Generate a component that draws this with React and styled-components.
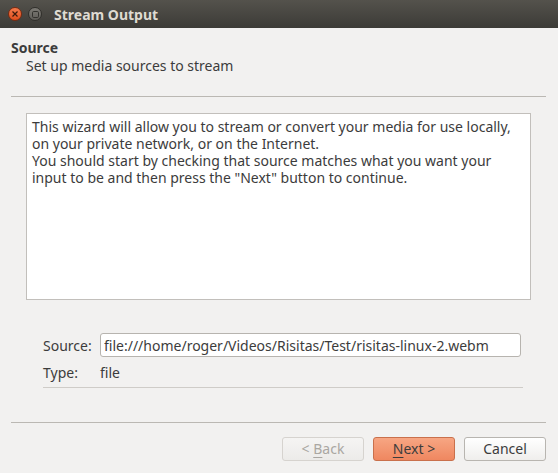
import React from 'react';
import styled, { createGlobalStyle } from 'styled-components';

const GlobalStyle = createGlobalStyle`
  html, body {
    margin: 0;
    padding: 0;
    background: #f2f1f0;
  }
  body {
    font-family: "Noto Sans", "Open Sans", sans-serif;
    font-size: 14px;
    color: #3c3c3c;
  }
`;

const Window = styled.div`
  width: 558px;
  height: 473px;
  display: flex;
  flex-direction: column;
  background: #f2f1f0;
  overflow: hidden;
`;

const TitleBar = styled.div`
  height: 28px;
  flex: none;
  display: flex;
  align-items: center;
  padding-left: 8px;
  gap: 6px;
  background: linear-gradient(#54524c, #3c3b37);
`;

const WinButton = styled.span`
  width: 14px;
  height: 14px;
  box-sizing: border-box;
  border-radius: 50%;
  display: flex;
  align-items: center;
  justify-content: center;
  border: 1px solid ${(p) => (p.close ? '#7a2a10' : '#302f2b')};
  background: ${(p) => (p.close
    ? 'linear-gradient(#f47a4c, #df4f1e)'
    : 'linear-gradient(#7d7b75, #5f5d58)')};
`;

const TitleText = styled.span`
  margin-left: 6px;
  font-weight: 700;
  font-size: 14px;
  color: #dfdbd2;
`;

const Header = styled.div`
  padding: 11px 11px 0;
  line-height: 17px;
`;

const Heading = styled.div`
  font-weight: 700;
`;

const SubHeading = styled.div`
  margin-top: 1px;
  padding-left: 15px;
`;

const Rule = styled.div`
  height: 1px;
  background: ${(p) => p.color || '#bbb8b3'};
  margin: ${(p) => p.margin};
`;

const IntroBox = styled.div`
  margin: 16px 0 0 26px;
  width: 505px;
  height: 187px;
  box-sizing: border-box;
  background: #fff;
  border: 1px solid #c2bfbb;
  padding: 4px 5px;
  line-height: 17px;
`;

const Form = styled.div`
  margin: 33px 0 0 43px;
  width: 480px;
  display: grid;
  grid-template-columns: 57px 1fr;
  row-gap: 7px;
  align-items: center;
`;

const Label = styled.span`
  line-height: 17px;
`;

const TextInput = styled.input`
  width: 421px;
  height: 24px;
  box-sizing: border-box;
  margin: 0;
  border: 1px solid #b7b4af;
  border-radius: 3px;
  background: #fff;
  padding: 0 3px;
  font: inherit;
  color: #3c3c3c;
  outline: none;
`;

const ButtonRow = styled.div`
  margin-top: 14px;
  padding-right: 12px;
  display: flex;
  justify-content: flex-end;
  gap: 9px;
`;

const Button = styled.button`
  width: 82px;
  height: 24px;
  box-sizing: border-box;
  margin: 0;
  padding: 0;
  border-radius: 3px;
  font: inherit;
  line-height: 20px;
  border: 1px solid ${(p) => (p.primary ? '#c9704c' : p.disabled ? '#d6d3cf' : '#b8b5b0')};
  background: ${(p) => (p.primary
    ? 'linear-gradient(#f7a683, #ef8760)'
    : p.disabled
      ? 'linear-gradient(#f5f4f3, #ecebe9)'
      : 'linear-gradient(#ffffff, #efeeec)')};
  color: ${(p) => (p.disabled ? '#aaa7a2' : '#3c3c3c')};
`;

const Mnemonic = styled.span`
  text-decoration: underline;
  text-underline-offset: 3px;
`;

export default function App() {
  return (
    <Window>
      <GlobalStyle />
      <TitleBar>
        <WinButton close>
          <svg width="6" height="6" viewBox="0 0 6 6">
            <path d="M0.5 0.5L5.5 5.5M5.5 0.5L0.5 5.5" stroke="#3a1a0c" strokeWidth="1.2" />
          </svg>
        </WinButton>
        <WinButton>
          <svg width="7" height="7" viewBox="0 0 7 7">
            <rect x="0.5" y="0.5" width="6" height="6" rx="1.2" fill="none" stroke="#33322e" strokeWidth="1" />
          </svg>
        </WinButton>
        <TitleText>Stream Output</TitleText>
      </TitleBar>

      <Header>
        <Heading>Source</Heading>
        <SubHeading>Set up media sources to stream</SubHeading>
      </Header>
      <Rule margin="22px 12px 0 11px" />

      <IntroBox>
        This wizard will allow you to stream or convert your media for use locally,
        on your private network, or on the Internet.
        <br />
        You should start by checking that source matches what you want your
        input to be and then press the "Next" button to continue.
      </IntroBox>

      <Form>
        <Label>Source:</Label>
        <TextInput readOnly value="file:///home/roger/Videos/Risitas/Test/risitas-linux-2.webm" />
        <Label>Type:</Label>
        <Label>file</Label>
      </Form>
      <Rule color="#cfccc8" margin="6px 35px 0 43px" />
      <Rule margin="34px 12px 0 11px" />

      <ButtonRow>
        <Button disabled>&lt; <Mnemonic>B</Mnemonic>ack</Button>
        <Button primary><Mnemonic>N</Mnemonic>ext &gt;</Button>
        <Button>Cancel</Button>
      </ButtonRow>
    </Window>
  );
}
